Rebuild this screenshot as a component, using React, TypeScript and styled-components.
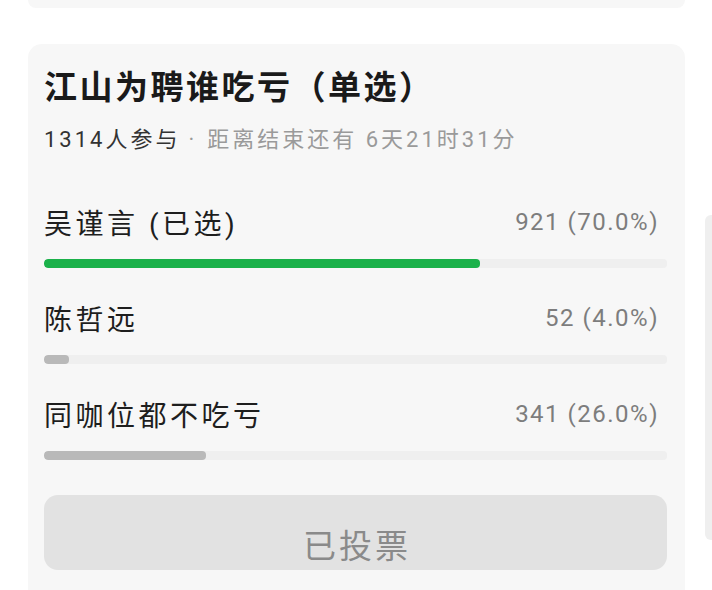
import React from "react";
import styled, { createGlobalStyle } from "styled-components";

const GlobalStyle = createGlobalStyle`
  html, body {
    margin: 0;
    padding: 0;
    background: #ffffff;
    font-family: Roboto, "Noto Sans CJK SC", sans-serif;
    overflow: hidden;
  }
`;

type Option = {
  name: string;
  votes: number;
  pct: number;
  picked?: boolean;
};

const options: Option[] = [
  { name: "吴谨言 (已选)", votes: 921, pct: 70, picked: true },
  { name: "陈哲远", votes: 52, pct: 4 },
  { name: "同咖位都不吃亏", votes: 341, pct: 26 },
];

export default function App() {
  return (
    <>
      <GlobalStyle />
      <Page>
        <Feed>
          <PrevCard />
          <PollCard>
            <Title>江山为聘谁吃亏（单选）</Title>
            <Meta>
              <strong>1314人参与</strong>
              <Dot>·</Dot>
              距离结束还有 6天21时31分
            </Meta>
            <OptionList>
              {options.map((o) => (
                <OptionItem key={o.name}>
                  <OptionRow>
                    <OptionName>{o.name}</OptionName>
                    <OptionValue>
                      {o.votes} ({o.pct.toFixed(1)}%)
                    </OptionValue>
                  </OptionRow>
                  <Track>
                    <Fill $picked={!!o.picked} style={{ width: `${o.pct}%` }} />
                  </Track>
                </OptionItem>
              ))}
            </OptionList>
            <VotedButton disabled>已投票</VotedButton>
          </PollCard>
        </Feed>
        <SidePeek />
      </Page>
    </>
  );
}

const Page = styled.div`
  display: flex;
  align-items: flex-start;
  width: 712px;
  height: 590px;
  overflow: hidden;
`;

const Feed = styled.div`
  display: flex;
  flex-direction: column;
  gap: 36px;
  width: 657px;
  margin-left: 28px;
  flex-shrink: 0;
`;

const PrevCard = styled.div`
  height: 8px;
  background: #f7f7f7;
  border-radius: 0 0 10px 10px;
`;

const PollCard = styled.div`
  background: #f7f7f7;
  border-radius: 14px;
  padding: 24px 18px 40px 16px;
`;

const Title = styled.h1`
  margin: 0;
  font-size: 33px;
  line-height: 40px;
  font-weight: 700;
  color: #1a1a1a;
  letter-spacing: 2.5px;
`;

const Meta = styled.div`
  margin-top: 18px;
  font-size: 22px;
  line-height: 28px;
  letter-spacing: 3px;
  color: #9a9a9a;
  white-space: nowrap;

  strong {
    font-weight: 400;
    color: #333333;
  }
`;

const Dot = styled.span`
  margin: 0 10px 0 8px;
`;

const OptionList = styled.div`
  margin-top: 50px;
  display: flex;
  flex-direction: column;
  gap: 32px;
`;

const OptionItem = styled.div`
  display: flex;
  flex-direction: column;
  gap: 19px;
`;

const OptionRow = styled.div`
  display: flex;
  justify-content: space-between;
  align-items: center;
  height: 36px;
  padding-right: 8px;
`;

const OptionName = styled.span`
  font-size: 28px;
  letter-spacing: 3.5px;
  color: #1e1e1e;
`;

const OptionValue = styled.span`
  font-size: 24px;
  letter-spacing: 1.5px;
  color: #7d7d7d;
`;

const Track = styled.div`
  height: 9px;
  background: #efefef;
  border-radius: 4px;
  overflow: hidden;
`;

const Fill = styled.div<{ $picked: boolean }>`
  height: 100%;
  border-radius: 4px;
  background: ${(p) => (p.$picked ? "#1bb14a" : "#b9b9b9")};
`;

const VotedButton = styled.button`
  margin-top: 35px;
  width: 100%;
  height: 75px;
  border: none;
  border-radius: 14px;
  background: #e2e2e2;
  color: #8a8a8a;
  font-family: inherit;
  font-size: 33px;
  letter-spacing: 3px;
  padding: 22px 0 0 3px;
  display: flex;
  align-items: center;
  justify-content: center;
`;

const SidePeek = styled.div`
  margin-left: 20px;
  margin-top: 215px;
  width: 12px;
  height: 325px;
  background: #efefef;
  border-radius: 6px 0 0 6px;
  flex-shrink: 0;
`;
